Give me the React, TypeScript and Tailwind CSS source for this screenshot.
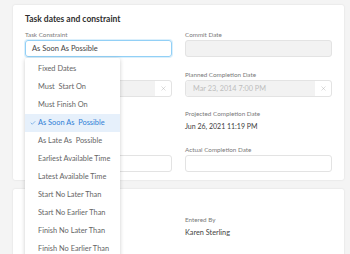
import { Check, X } from 'lucide-react'

const options = [
  'Fixed Dates',
  'Must  Start On',
  'Must Finish On',
  'As Soon As  Possible',
  'As Late As  Possible',
  'Earliest Available Time',
  'Latest Available Time',
  'Start No Later Than',
  'Start No Earlier Than',
  'Finish No Later Than',
  'Finish No Earlier Than',
]

function Label({ children }: { children?: React.ReactNode }) {
  return <div className="h-[11px] whitespace-pre text-[6.3px] leading-[13px] text-[#7a7a7a]">{children}</div>
}

function ClearInput({ value }: { value?: string }) {
  return (
    <div className="mt-[1px] flex h-[17px] rounded-[3px] border border-[#e3e3e3] bg-white">
      <div className="flex-1 rounded-l-[3px] bg-[#f2f2f2] px-[7px] text-[7.3px] leading-[15px] text-[#bdbdbd]">{value}</div>
      <div className="flex w-[16px] items-center justify-center text-[#a5a5a5]">
        <X size={7} strokeWidth={1.3} />
      </div>
    </div>
  )
}

function Box({ gray }: { gray?: boolean }) {
  return (
    <div className={gray ? 'mt-[1px] h-[17px] rounded-[3px] border border-[#e3e3e3] bg-[#f2f2f2]' : 'mt-[1px] h-[17px] rounded-[3px] border border-[#e3e3e3] bg-white'} />
  )
}

export default function App() {
  return (
    <div className="h-[254px] overflow-hidden bg-[#f4f4f4] pl-[13px] pr-[6px] pt-[5px] font-['Lato',sans-serif]">
      <div className="relative h-[175px] rounded-[2px] bg-white px-[12px] pt-[9px] shadow-[0_0_2px_rgba(0,0,0,0.12)]">
        <div className="h-[14px] text-[8.5px] font-bold leading-[10px] text-[#2f2f2f]">Task dates and constraint</div>
        <div className="grid grid-cols-2 gap-x-[13px]">
          <div>
            <Label>Task Constraint</Label>
            <div className="mt-[1px] h-[17px] rounded-[3px] border border-[#92d0f6] px-[6px] text-[7.5px] leading-[15px] text-[#444] shadow-[0_0_0_1px_#dcf0fc]">
              As Soon As Possible
            </div>
          </div>
          <div>
            <Label>Commit Date</Label>
            <Box gray />
          </div>
          <div className="mt-[11px]">
            <Label />
            <ClearInput />
          </div>
          <div className="mt-[11px]">
            <Label>Planned Completion Date</Label>
            <ClearInput value="Mar 23, 2014 7:00 PM" />
          </div>
          <div className="mt-[10px]">
            <Label />
            <div className="mt-[2px] h-[12px]" />
          </div>
          <div className="mt-[10px]">
            <Label>Projected Completion Date</Label>
            <div className="mt-[2px] text-[7px] leading-[12px] text-[#3d3d3d]">Jun 26, 2021 11:19 PM</div>
          </div>
          <div className="mt-[11px]">
            <Label />
            <Box />
          </div>
          <div className="mt-[11px]">
            <Label>Actual Completion Date</Label>
            <Box />
          </div>
        </div>
        <div className="absolute left-[12px] top-[53px] z-10 w-[95px] rounded-[2px] bg-white py-[2px] shadow-[0_1px_4px_rgba(0,0,0,0.2)]">
          {options.map((o) => {
            const active = o === 'As Soon As  Possible'
            return (
              <div
                key={o}
                className={
                  active
                    ? 'relative h-[18px] whitespace-pre bg-[#e6f0fb] pl-[13px] text-[7.4px] leading-[18px] text-[#2f7fd6]'
                    : 'h-[18px] whitespace-pre pl-[13px] text-[7.4px] leading-[18px] text-[#666]'
                }
              >
                {active && <Check size={6} strokeWidth={2} className="absolute left-[5px] top-[6px]" />}
                {o}
              </div>
            )
          })}
        </div>
      </div>
      <div className="mt-[9px] h-[80px] rounded-[2px] bg-white px-[12px] shadow-[0_0_2px_rgba(0,0,0,0.12)]">
        <div className="grid grid-cols-2 gap-x-[13px] pt-[24px]">
          <div />
          <div>
            <Label>Entered By</Label>
            <div className="mt-[3px] text-[7.3px] leading-[12px] text-[#444]">Karen Sterling</div>
          </div>
        </div>
      </div>
    </div>
  )
}
